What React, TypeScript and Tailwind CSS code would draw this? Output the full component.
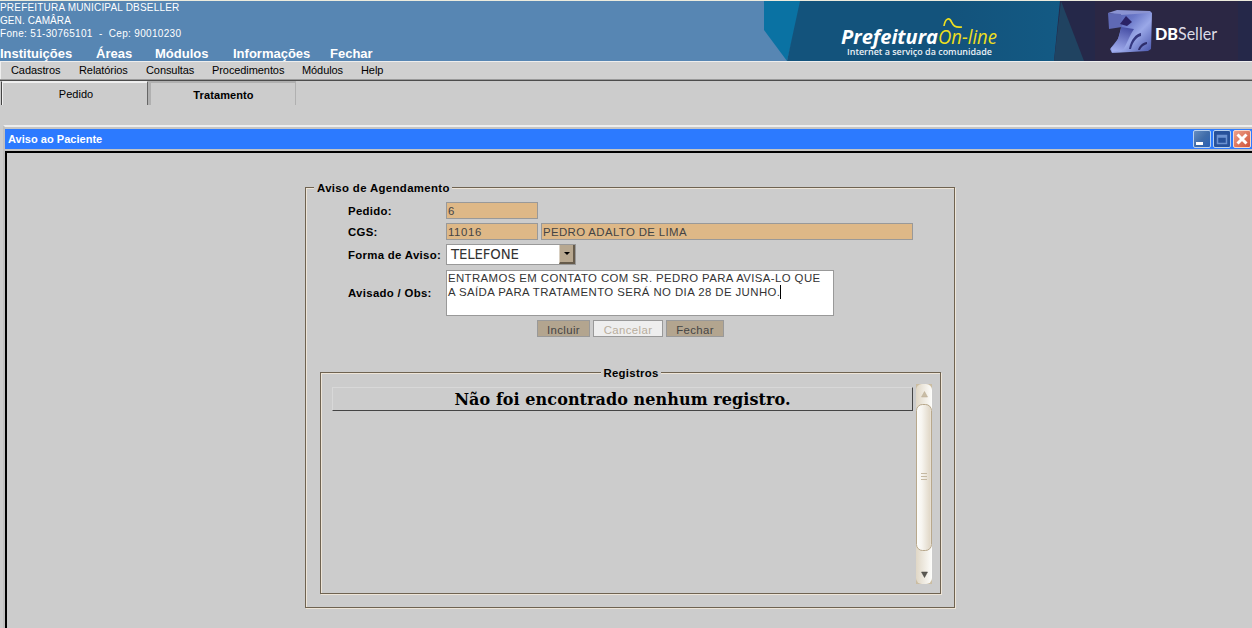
import React from 'react';

const institution = [
  { text: 'PREFEITURA MUNICIPAL DBSELLER', cls: 'tracking-[0.19px]' },
  { text: 'GEN. CAMÂRA', cls: 'tracking-[0.08px]' },
  { text: 'Fone: 51-30765101  -  Cep: 90010230', cls: 'tracking-[0.32px]' },
];

const mainMenu = [
  { text: 'Instituições', cls: 'w-24' },
  { text: 'Áreas', cls: 'w-[59px]' },
  { text: 'Módulos', cls: 'w-[78px]' },
  { text: 'Informações', cls: 'w-[97px]' },
  { text: 'Fechar', cls: 'w-16' },
];

const subMenu = [
  { text: 'Cadastros', cls: 'w-[68px]' },
  { text: 'Relatórios', cls: 'w-[67px]' },
  { text: 'Consultas', cls: 'w-[66px]' },
  { text: 'Procedimentos', cls: 'w-[90px]' },
  { text: 'Módulos', cls: 'w-[59px]' },
  { text: 'Help', cls: 'w-10' },
];

function Banner() {
  return (
    <svg width="488" height="60" viewBox="764 1 488 60" className="block shrink-0">
      <defs>
        <linearGradient id="cube" x1="0" y1="0" x2="1" y2="1">
          <stop offset="0" stopColor="#4c57a8" />
          <stop offset="0.35" stopColor="#6a78c8" />
          <stop offset="0.6" stopColor="#9aa8e8" />
          <stop offset="1" stopColor="#4450a8" />
        </linearGradient>
        <linearGradient id="cubeLeg" x1="0.6" y1="0" x2="0.3" y2="1">
          <stop offset="0" stopColor="#474fa5" />
          <stop offset="1" stopColor="#a3aff0" />
        </linearGradient>
        <linearGradient id="sea" x1="0" x2="1">
          <stop offset="0" stopColor="#13537c" />
          <stop offset="0.6" stopColor="#13537c" />
          <stop offset="1" stopColor="#135a84" />
        </linearGradient>
      </defs>
      <path d="M764 1H802L787 61L764 30Z" fill="#0a72a3" />
      <path d="M800 1H1062V61H787Z" fill="url(#sea)" />
      <path d="M1060 1H1252V61H1054Z" fill="#252849" />
      <path d="M1061 1L1084 61H1054Z" fill="#204361" />
      <path d="M1095 1H1238V61H1095Z" fill="#2b2744" />
      <text x="841" y="44" textLength="97" lengthAdjust="spacingAndGlyphs" className="fill-white font-['Open_Sans',sans-serif] text-[20px] font-bold italic">Prefeitura</text>
      <text x="938" y="44" textLength="59" lengthAdjust="spacingAndGlyphs" className="fill-[#eedf20] font-['Open_Sans',sans-serif] text-[20px] font-medium italic">On-line</text>
      <path d="M944 26C945 19 949 17 951 21S954 28 962 27" fill="none" stroke="#eedf20" strokeWidth="1.7" />
      <text x="847" y="55" textLength="145" lengthAdjust="spacingAndGlyphs" className="fill-[#eaf1f6] font-['Open_Sans',sans-serif] text-[9.5px] font-semibold">Internet a serviço da comunidade</text>
      <path d="M1121 12L1150 11L1152 13L1151 49L1148 51L1112 53L1110 49L1118 39L1121 28Z" fill="url(#cube)" />
      <path d="M1108 13L1117 10L1150 11L1149 13L1121 15Z" fill="#8a93d2" />
      <path d="M1108 13L1121 14L1122 27L1109 29Z" fill="#5f69b5" />
      <path d="M1121 27L1134 29C1129 36 1127 44 1123 50L1112 52L1111 48C1118 42 1120 35 1121 27Z" fill="url(#cubeLeg)" />
      <path d="M1120 24L1126 16L1132 22L1127 26Z" fill="#2a2266" />
      <path d="M1141 33C1136 34 1131 39 1129 49L1131 49C1133 41 1137 37 1141 36Z" fill="#34377f" />
      <path d="M1147 42C1143 42 1139 46 1138 50H1140C1141 47 1144 45 1147 44Z" fill="#2d2d6b" />
      <text x="1155" y="40" textLength="23" lengthAdjust="spacingAndGlyphs" className="fill-white font-[Lato,sans-serif] text-[17px] font-black">DB</text>
      <text x="1178" y="40" textLength="39" lengthAdjust="spacingAndGlyphs" className="fill-[#dedce6] font-[Lato,sans-serif] text-[18px]">Seller</text>
    </svg>
  );
}

function WindowButton({ kind }: { kind: 'min' | 'max' | 'close' }) {
  return (
    <svg width="18" height="18" viewBox="0 0 18 18" className="block">
      <defs>
        <linearGradient id="winBlue" x1="0" y1="0" x2="1" y2="1">
          <stop offset="0" stopColor="#6990c2" />
          <stop offset="0.5" stopColor="#3f6ca9" />
          <stop offset="1" stopColor="#2860b5" />
        </linearGradient>
        <linearGradient id="winRed" x1="0" y1="0" x2="1" y2="1">
          <stop offset="0" stopColor="#eda28a" />
          <stop offset="1" stopColor="#cf5038" />
        </linearGradient>
      </defs>
      <rect
        x="0.5" y="0.5" width="17" height="17" rx="1.5"
        fill={kind === 'close' ? 'url(#winRed)' : kind === 'min' ? 'url(#winBlue)' : '#28519a'}
        stroke={kind === 'close' ? '#f6d9ce' : '#b9d1ee'}
      />
      {kind === 'min' && <path d="M3 12H10V15H3Z" fill="#fff" />}
      {kind === 'max' && <path d="M4.5 5.5H13.5V13.5H4.5ZM4.5 7H13.5" fill="none" stroke="#6c92d2" strokeWidth="1.5" />}
      {kind === 'close' && <path d="M4.5 4.5L13.5 13.5M13.5 4.5L4.5 13.5" stroke="#fff" strokeWidth="3" />}
    </svg>
  );
}

function Field({ value, cls }: { value: string; cls: string }) {
  return (
    <div className={`h-[17px] border border-[#999] bg-[#deb887] pl-px text-[11.4px] leading-[17px] text-[#444] ${cls}`}>{value}</div>
  );
}

function Label({ children, cls }: { children: React.ReactNode; cls: string }) {
  return <div className={`w-[98px] shrink-0 whitespace-nowrap text-[11.4px] font-bold tracking-[0.31px] text-black ${cls}`}>{children}</div>;
}

const groove =
  'border border-[#6f6351] shadow-[1px_1px_0_#eee5d8,inset_1px_1px_0_#eee5d8]';

function Scrollbar() {
  return (
    <svg width="16" height="200" viewBox="0 0 16 200" className="block shrink-0">
      <defs>
        <linearGradient id="track" x1="0" x2="1">
          <stop offset="0" stopColor="#e0d7c6" />
          <stop offset="1" stopColor="#fdfdfb" />
        </linearGradient>
        <linearGradient id="thumb" x1="0" x2="1">
          <stop offset="0" stopColor="#fdfdfb" />
          <stop offset="0.35" stopColor="#f7f5f0" />
          <stop offset="0.9" stopColor="#e1d8c8" />
          <stop offset="1" stopColor="#f4efe8" />
        </linearGradient>
      </defs>
      <rect width="16" height="200" fill="#cbbda2" />
      <rect width="16" height="200" rx="6" fill="url(#track)" />
      <rect x="0.5" y="20.5" width="15" height="146" rx="6" fill="url(#thumb)" stroke="#b8a88c" />
      <path d="M5.5 13L8.5 7.5L11.5 13Z" fill="#c9bda6" stroke="#b8aa90" strokeWidth="0.5" />
      <path d="M5.5 188L8.5 193.5L11.5 188Z" fill="#5b5953" stroke="#44423e" strokeWidth="0.5" />
      <path d="M5 89.5H11M5 92.5H11M5 95.5H11" stroke="#c5b9a2" />
    </svg>
  );
}

export default function App() {
  return (
    <div className="flex h-[628px] w-[1252px] flex-col overflow-hidden bg-[#ccc] font-['Liberation_Sans',Arial,sans-serif] text-black">
      <header className="flex h-[61px] shrink-0 justify-between border-t border-[#ecebdd] bg-[#5786b3] text-white">
        <div>
          <div className="h-[44px] text-[10px] leading-[13px]">
            {institution.map((line) => (
              <div key={line.text} className={`whitespace-pre ${line.cls}`}>{line.text}</div>
            ))}
          </div>
          <nav className="flex text-[13px] font-bold leading-[17px]">
            {mainMenu.map((item) => (
              <a key={item.text} className={item.cls}>{item.text}</a>
            ))}
          </nav>
        </div>
        <Banner />
      </header>

      <nav className="flex h-[18px] shrink-0 border-l border-t border-[#eee] bg-[#d0d0d0] pl-2.5 text-[11px] leading-[17px] tracking-[-0.08px]">
        {subMenu.map((item) => (
          <a key={item.text} className={item.cls}>{item.text}</a>
        ))}
      </nav>

      <div className="h-0.5 shrink-0 border-b border-t border-b-[#4c4c4c] border-t-[#999]" />
      <div className="flex h-11 shrink-0 items-start pl-px text-[11px]">
        <div className="flex h-6 w-[147px] items-center justify-center border-l border-r border-t border-l-[#444] border-r-[#666] border-t-[#eee] pl-[3px] pt-px shadow-[inset_1px_1px_0_#f0f0f0]">Pedido</div>
        <div className="flex h-6 w-[148px] items-center justify-center border-l-[3px] border-r border-t-2 border-[#b0b0b0] pl-px pt-[3px] font-bold tracking-[0.1px]">Tratamento</div>
      </div>

      <section className="ml-[3px] flex min-h-0 flex-1 flex-col border-l-2 border-t-2 border-l-[#c0c0c0] border-t-[#eee] bg-[#c4c4c4] pt-0.5">
        <div className="flex h-5 shrink-0 items-center justify-between bg-[#2c7aff] pl-[3px] pr-px text-[11px] font-bold text-white">
          <span className="tracking-[0.03px]">Aviso ao Paciente</span>
          <div className="flex gap-0.5">
            <WindowButton kind="min" />
            <WindowButton kind="max" />
            <WindowButton kind="close" />
          </div>
        </div>
        <main className="mt-0.5 flex-1 border-l-2 border-t-2 border-black bg-[#ccc] pl-[298px] pt-7">
          <fieldset className={`h-[427px] w-[650px] pl-3.5 ${groove}`}>
            <legend className="-ml-1.5 h-[13px] bg-[#ccc] pl-[3px] pr-0.5 text-[11.4px] font-bold leading-[14px] tracking-[0.35px]">Aviso de Agendamento</legend>
            <div className="flex flex-col pl-7 pt-2">
              <div className="flex h-[21px]"><Label cls="leading-[18px]">Pedido:</Label><Field value="6" cls="w-[92px]" /></div>
              <div className="flex h-[21px]">
                <Label cls="leading-[18px]">CGS:</Label>
                <Field value="11016" cls="mr-[3px] w-[92px] tracking-[0.6px]" />
                <Field value="PEDRO ADALTO DE LIMA" cls="w-[372px] tracking-[0.38px]" />
              </div>
              <div className="flex h-[26px]">
                <Label cls="leading-[22px]">Forma de Aviso:</Label>
                <div className="flex h-[21px] w-[130px] items-center justify-between border border-[#999] bg-white pl-1 font-['DejaVu_Sans',sans-serif] text-[13.33px] text-[#333]">
                  <span className="tracking-[-0.15px]">TELEFONE</span>
                  <div className="flex h-[19px] w-4 items-center justify-center border-b-2 border-l border-r-2 border-b-[#665b4b] border-l-[#d8cfc1] border-r-[#665b4b] bg-[#b8a890]">
                    <svg width="6" height="3" viewBox="0 0 6 3"><path d="M0 0H6L3 3Z" fill="#000" /></svg>
                  </div>
                </div>
              </div>
              <div className="flex h-[50px]">
                <Label cls="leading-[46px]">Avisado / Obs:</Label>
                <div className="h-[46px] w-[388px] border border-[#999] bg-white pl-px text-[11.4px] leading-[14px] text-[#333]">
                  <div className="whitespace-nowrap tracking-[0.4px]">ENTRAMOS EM CONTATO COM SR. PEDRO PARA AVISA-LO QUE</div>
                  <div className="flex whitespace-nowrap tracking-[0.42px]">A SAÍDA PARA TRATAMENTO SERÁ NO DIA 28 DE JUNHO.<span className="h-[14px] w-px bg-black" /></div>
                </div>
              </div>
              <div className="flex h-[46px] gap-[3px] pl-[189px] text-center text-[11.4px] leading-[18px] tracking-[0.38px] text-[#444]">
                <button className="h-[17px] w-[53px] border border-[#999] bg-[#b3a58f]">Incluir</button>
                <button className="h-[17px] w-[70px] border border-[#999] bg-[#eee] text-[#b8ad9c]">Cancelar</button>
                <button className="h-[17px] w-[58px] border border-[#999] bg-[#b3a58f]">Fechar</button>
              </div>
            </div>
            <fieldset className={`h-[228px] w-[621px] min-w-0 pl-[11px] pr-[10px] ${groove}`}>
              <legend className="mx-auto h-[13px] bg-[#ccc] px-0.5 text-[11.4px] font-bold leading-[14px] tracking-[0.3px]">Registros</legend>
              <div className="flex gap-[3px] pt-[5px]">
                <div className="mt-[3px] h-6 w-[581px] shrink-0 border border-b-[#444] border-l-[#d8d8d8] border-r-[#444] border-t-[#d8d8d8] text-center font-['DejaVu_Serif',serif] text-[16px] font-bold leading-[24px] tracking-[0.07px]">Não foi encontrado nenhum registro.</div>
                <Scrollbar />
              </div>
            </fieldset>
          </fieldset>
        </main>
      </section>
    </div>
  );
}
